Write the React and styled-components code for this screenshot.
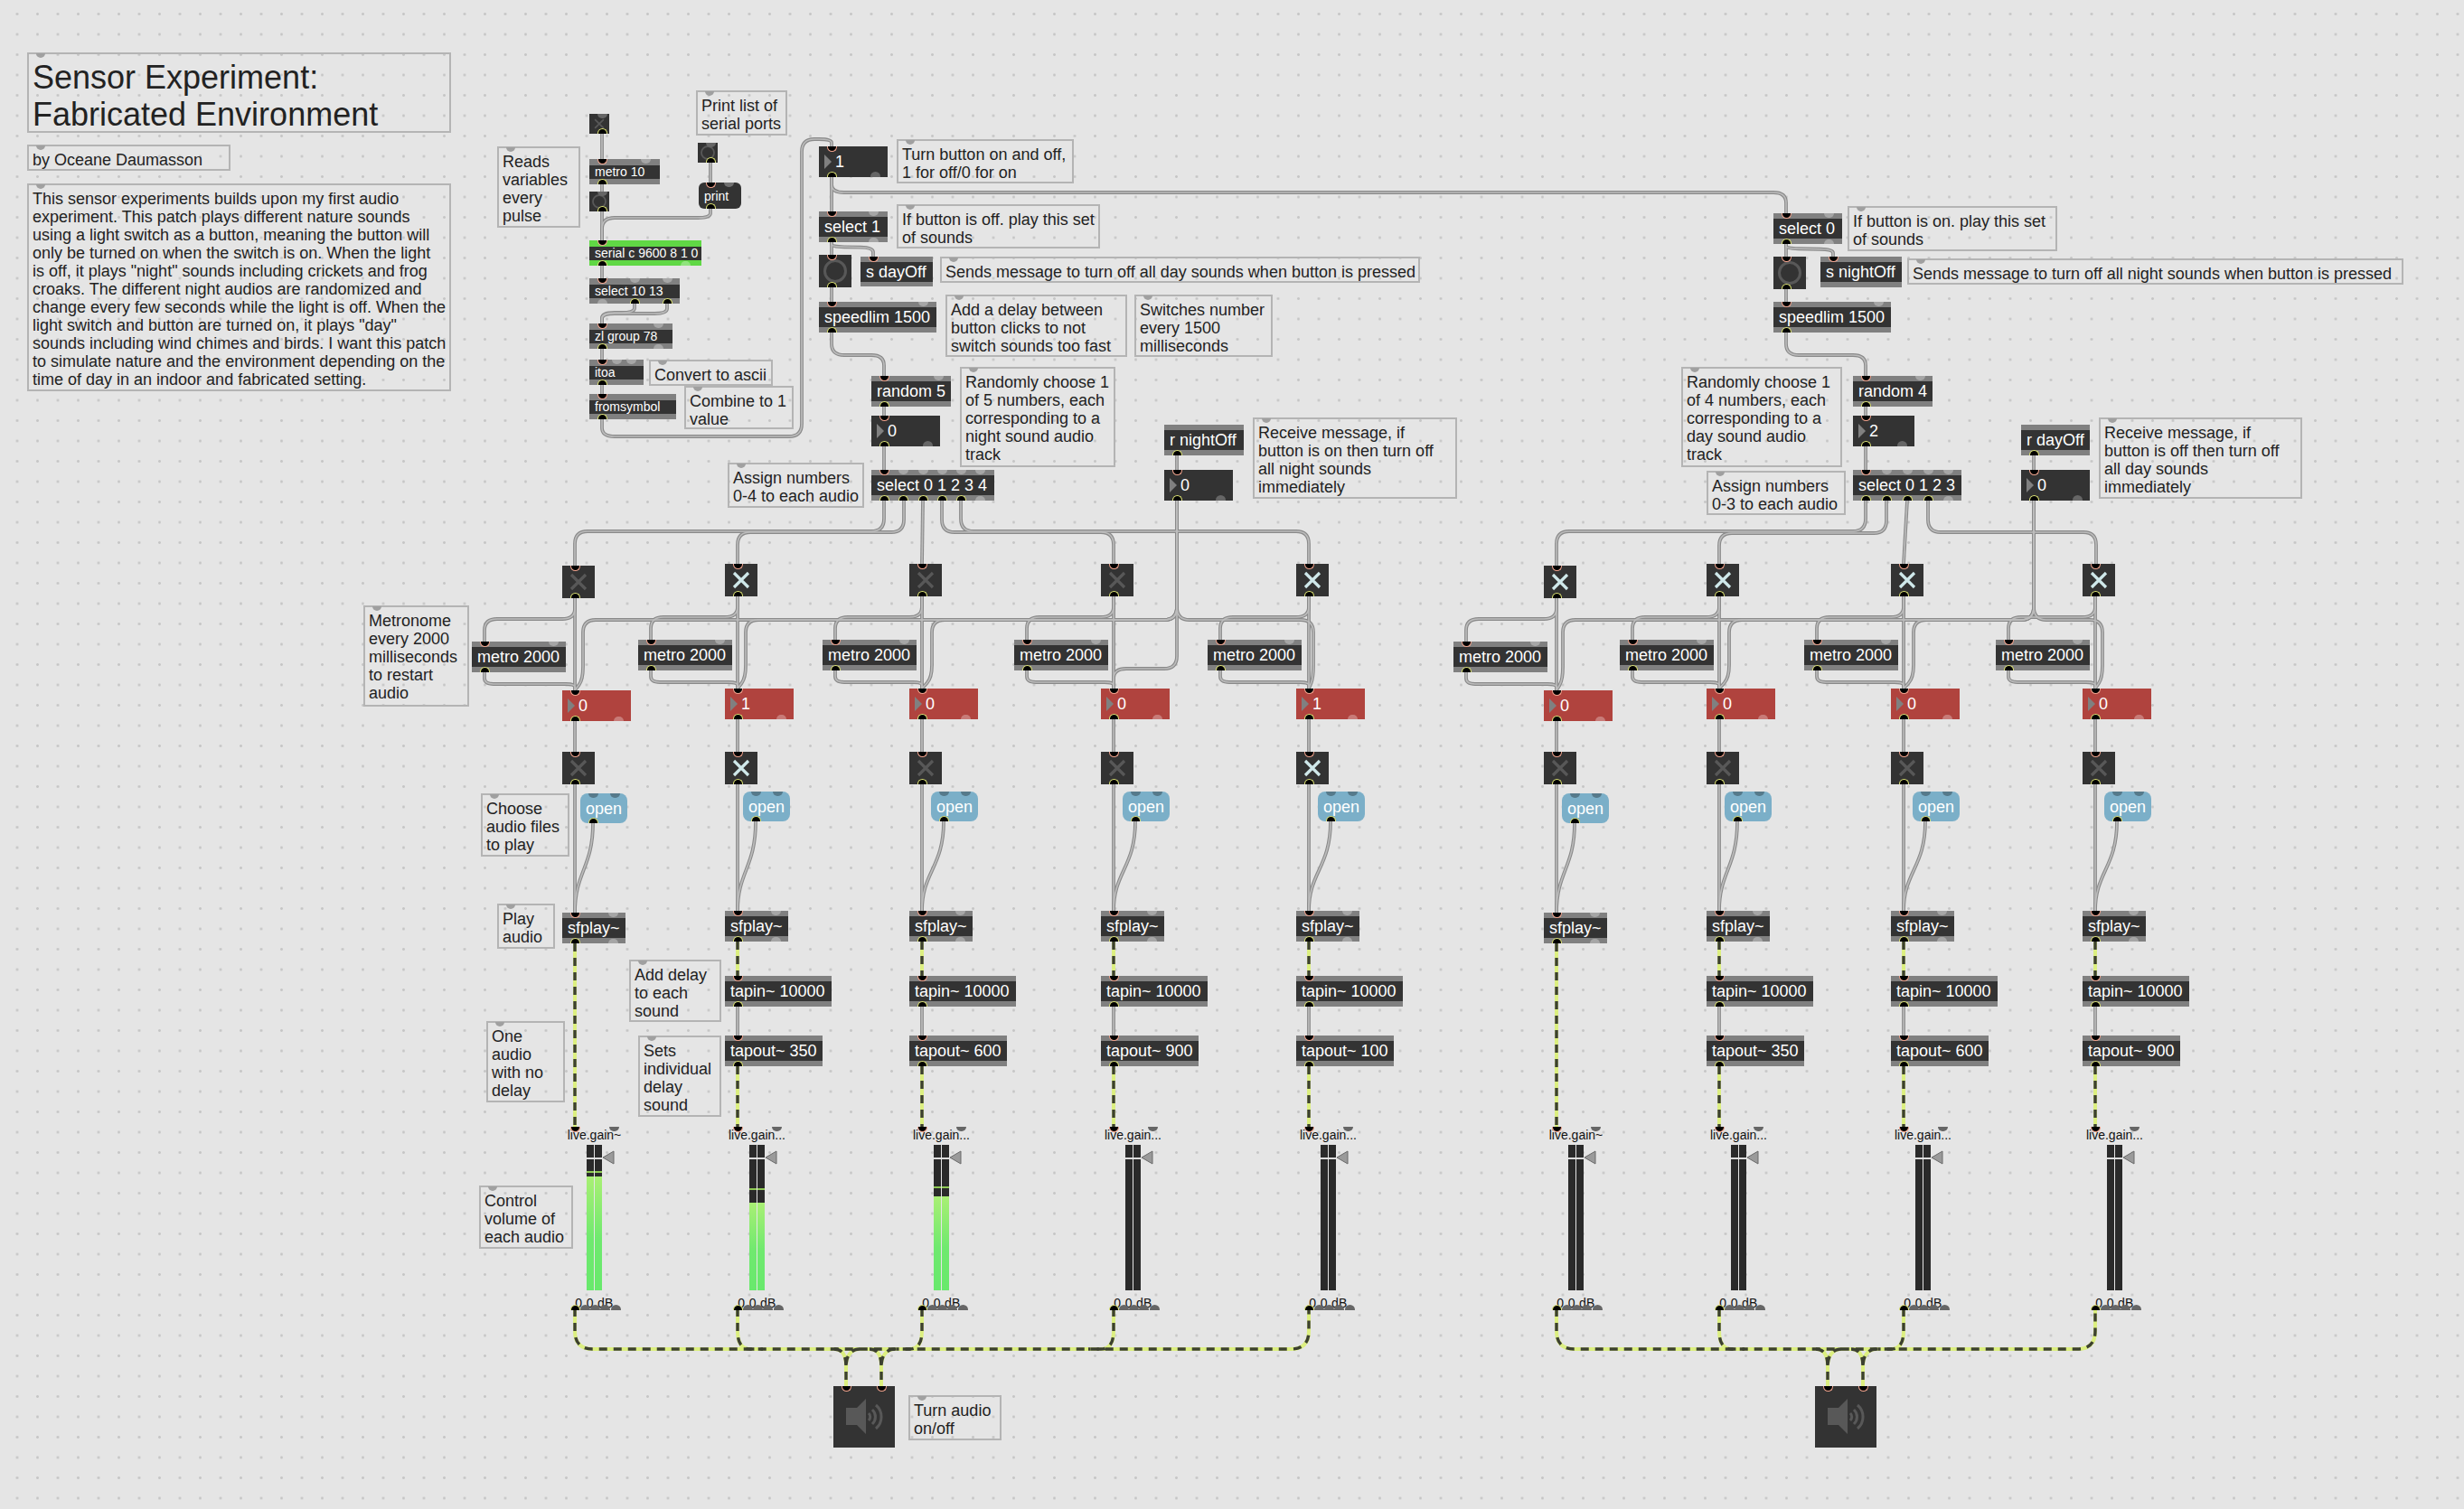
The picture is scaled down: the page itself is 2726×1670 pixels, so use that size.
import React from "react";
import styled, { createGlobalStyle } from "styled-components";

// route through points, rounding every corner
const route = (pts, r = 14) => {
    let d = `M${pts[0][0]},${pts[0][1]}`;
    for (let i = 1; i < pts.length - 1; i++) {
        const [ax, ay] = pts[i - 1];
        const [bx, by] = pts[i];
        const [cx, cy] = pts[i + 1];
        const la = Math.hypot(bx - ax, by - ay);
        const lc = Math.hypot(cx - bx, cy - by);
        const ra = Math.min(r, la / 2);
        const rc = Math.min(r, lc / 2);
        d += ` L${bx - ((bx - ax) / la) * ra},${by - ((by - ay) / la) * ra}`;
        d += ` Q${bx},${by} ${bx + ((cx - bx) / lc) * rc},${by + ((cy - by) / lc) * rc}`;
    }
    const last = pts[pts.length - 1];
    return d + ` L${last[0]},${last[1]}`;
};

const leftCols = [
    { x: 622, ty: 626, mx: 522, ox: 642, val: 0, on: false, on2: false, gain: "live.gain~", peak: 1296, fill: 1302 },
    { x: 802, ty: 624, mx: 706, ox: 822, val: 1, on: true, on2: true, tap: 350, outW: 108, gain: "live.gain...", peak: 1315, fill: 1331 },
    { x: 1006, ty: 624, mx: 910, ox: 1030, val: 0, on: false, on2: false, tap: 600, outW: 108, gain: "live.gain...", peak: 1313, fill: 1324 },
    { x: 1218, ty: 624, mx: 1122, ox: 1242, val: 0, on: false, on2: false, tap: 900, outW: 108, gain: "live.gain..." },
    { x: 1434, ty: 624, mx: 1336, ox: 1458, val: 1, on: true, on2: true, tap: 100, outW: 108, gain: "live.gain..." },
];

const rightCols = [
    { x: 1708, ty: 626, mx: 1608, ox: 1728, val: 0, on: true, on2: false, gain: "live.gain~" },
    { x: 1888, ty: 624, mx: 1792, ox: 1908, val: 0, on: true, on2: false, tap: 350, outW: 108, gain: "live.gain..." },
    { x: 2092, ty: 624, mx: 1996, ox: 2116, val: 0, on: true, on2: false, tap: 600, outW: 108, gain: "live.gain..." },
    { x: 2304, ty: 624, mx: 2208, ox: 2328, val: 0, on: true, on2: false, tap: 900, outW: 108, gain: "live.gain..." },
];

const comments = [
    { x: 30, y: 58, w: 469, h: 89, big: true, text: "Sensor Experiment:\nFabricated Environment" },
    { x: 30, y: 160, w: 225, h: 29, text: "by Oceane Daumasson" },
    { x: 30, y: 203, w: 469, h: 230, text: `This sensor experiments builds upon my first audio
experiment. This patch plays different nature sounds
using a light switch as a button, meaning the button will
only be turned on when the switch is on. When the light
is off, it plays "night" sounds including crickets and frog
croaks. The different night audios are randomized and
change every few seconds while the light is off. When the
light switch and button are turned on, it plays "day"
sounds including wind chimes and birds. I want this patch
to simulate nature and the environment depending on the
time of day in an indoor and fabricated setting.` },
    { x: 550, y: 162, w: 92, h: 90, text: "Reads\nvariables\nevery\npulse" },
    { x: 770, y: 100, w: 101, h: 50, text: "Print list of\nserial ports" },
    { x: 718, y: 398, w: 137, h: 29, text: "Convert to ascii" },
    { x: 757, y: 427, w: 121, h: 48, text: "Combine to 1\nvalue" },
    { x: 992, y: 154, w: 196, h: 49, text: "Turn button on and off,\n1 for off/0 for on" },
    { x: 992, y: 226, w: 225, h: 49, text: "If button is off. play this set\nof sounds" },
    { x: 1040, y: 284, w: 531, h: 29, text: "Sends message to turn off all day sounds when button is pressed" },
    { x: 1046, y: 326, w: 201, h: 69, text: "Add a delay between\nbutton clicks to not\nswitch sounds too fast" },
    { x: 1255, y: 326, w: 153, h: 69, text: "Switches number\nevery 1500\nmilliseconds" },
    { x: 1062, y: 406, w: 172, h: 111, text: "Randomly choose 1\nof 5 numbers, each\ncorresponding to a\nnight sound audio\ntrack" },
    { x: 805, y: 512, w: 151, h: 50, text: "Assign numbers\n0-4 to each audio" },
    { x: 1386, y: 462, w: 226, h: 90, text: "Receive message, if\nbutton is on then turn off\nall night sounds\nimmediately" },
    { x: 402, y: 670, w: 117, h: 112, text: "Metronome\nevery 2000\nmilliseconds\nto restart\naudio" },
    { x: 532, y: 878, w: 98, h: 70, text: "Choose\naudio files\nto play" },
    { x: 550, y: 1000, w: 64, h: 50, text: "Play\naudio" },
    { x: 696, y: 1062, w: 102, h: 69, text: "Add delay\nto each\nsound" },
    { x: 706, y: 1146, w: 92, h: 90, text: "Sets\nindividual\ndelay\nsound" },
    { x: 538, y: 1130, w: 87, h: 90, text: "One\naudio\nwith no\ndelay" },
    { x: 530, y: 1312, w: 104, h: 70, text: "Control\nvolume of\neach audio" },
    { x: 1005, y: 1544, w: 103, h: 50, text: "Turn audio\non/off" },
    { x: 2044, y: 228, w: 232, h: 50, text: "If button is on. play this set\nof sounds" },
    { x: 2110, y: 286, w: 549, h: 29, text: "Sends message to turn off all night sounds when button is pressed" },
    { x: 1860, y: 406, w: 178, h: 111, text: "Randomly choose 1\nof 4 numbers, each\ncorresponding to a\nday sound audio\ntrack" },
    { x: 1888, y: 521, w: 154, h: 49, text: "Assign numbers\n0-3 to each audio" },
    { x: 2322, y: 462, w: 225, h: 90, text: "Receive message, if\nbutton is off then turn off\nall day sounds\nimmediately" },
];

const objects = [
    { x: 652, y: 176, w: 78, small: true, text: "metro 10", hin: [62] },
    { x: 652, y: 266, w: 124, small: true, green: true, text: "serial c 9600 8 1 0", hout: [106] },
    { x: 652, y: 308, w: 100, small: true, text: "select 10 13", hin: [50, 86], out: [50, 86], hout: [14] },
    { x: 652, y: 358, w: 92, small: true, text: "zl group 78", hin: [76], hout: [76] },
    { x: 652, y: 398, w: 60, small: true, text: "itoa", hin: [30, 46] },
    { x: 652, y: 436, w: 96, small: true, text: "fromsymbol" },
    { x: 906, y: 234, w: 76, text: "select 1", hin: [60], hout: [60] },
    { x: 952, y: 284, w: 80, h: 33, text: "s dayOff", noOut: true },
    { x: 906, y: 334, w: 130, text: "speedlim 1500", hin: [115] },
    { x: 964, y: 416, w: 88, text: "random 5", hin: [74] },
    { x: 964, y: 520, w: 136, text: "select 0 1 2 3 4", hin: [35.5, 57, 78, 99, 120], out: [14, 35.5, 57, 78, 99], hout: [120] },
    { x: 1288, y: 470, w: 88, text: "r nightOff", noIn: true },
    { x: 1962, y: 236, w: 76, text: "select 0", hin: [61], hout: [61] },
    { x: 2014, y: 284, w: 90, h: 34, text: "s nightOff", noOut: true },
    { x: 1962, y: 334, w: 130, text: "speedlim 1500", hin: [116] },
    { x: 2050, y: 416, w: 88, text: "random 4", hin: [74] },
    { x: 2050, y: 520, w: 120, text: "select 0 1 2 3", hin: [37, 60, 83, 105], out: [14, 37, 60, 83], hout: [105] },
    { x: 2236, y: 470, w: 76, text: "r dayOff", noIn: true },
];

const numbers = [
    { x: 906, y: 162, w: 76, val: 1 },
    { x: 964, y: 460, w: 76, val: 0 },
    { x: 1288, y: 520, w: 76, val: 0 },
    { x: 2050, y: 460, w: 68, val: 2 },
    { x: 2236, y: 520, w: 76, val: 0 },
];

const buildWires = () => {
    const plain = [
        [[666, 148], [666, 176]],
        [[666, 204], [666, 212]],
        [[666, 234], [666, 266]],
        [[786, 180], [786, 202]],
        [[786, 231], [786, 241], [666, 241], [666, 266]],
        [[666, 294], [666, 308]],
        [[702, 336], [702, 346], [666, 346], [666, 358]],
        [[738, 336], [738, 347], [666, 347], [666, 358]],
        [[666, 386], [666, 398]],
        [[666, 426], [666, 436]],
        [[666, 464], [666, 483], [887, 483], [887, 154], [920, 154], [920, 162]],

        [[920, 196], [920, 234]],
        [[920, 196], [920, 213], [1976, 213], [1976, 236]],
        [[920, 268], [920, 282]],
        [[920, 268], [920, 273], [966, 274], [966, 284]],
        [[920, 318], [920, 334]],
        [[920, 368], [920, 393], [978, 393], [978, 416]],
        [[978, 450], [978, 460]],
        [[978, 494], [978, 520]],
        [[1302, 504], [1302, 520]],

        [[978, 554], [978, 588], [636, 588], [636, 626]],
        [[1000, 554], [1000, 589], [816, 589], [816, 624]],
        [[1021, 554], [1020, 624]],
        [[1042, 554], [1042, 589], [1232, 589], [1232, 624]],
        [[1063, 554], [1063, 588], [1448, 588], [1448, 624]],

        [[1302, 554], [1302, 686], [645, 686], [645, 752], [636, 764]],
        [[1302, 554], [1302, 686], [825, 686], [825, 750], [816, 762]],
        [[1302, 554], [1302, 686], [1031, 686], [1031, 750], [1020, 762]],
        [[1302, 554], [1302, 740], [1232, 740], [1232, 762]],
        [[1302, 554], [1302, 686], [1453, 686], [1453, 750], [1448, 762]],

        [[1976, 270], [1976, 284]],
        [[1976, 270], [1976, 275], [2028, 276], [2028, 284]],
        [[1976, 320], [1976, 334]],
        [[1976, 368], [1976, 393], [2064, 393], [2064, 416]],
        [[2064, 450], [2064, 460]],
        [[2064, 494], [2064, 520]],
        [[2250, 504], [2250, 520]],

        [[2064, 554], [2064, 588], [1722, 588], [1722, 626]],
        [[2087, 554], [2087, 590], [1902, 590], [1902, 624]],
        [[2110, 554], [2106, 624]],
        [[2133, 554], [2133, 589], [2319, 589], [2319, 624]],

        [[2250, 554], [2250, 686], [1729, 686], [1729, 752], [1722, 764]],
        [[2250, 554], [2250, 686], [1913, 686], [1913, 750], [1902, 762]],
        [[2250, 554], [2250, 686], [2117, 686], [2117, 750], [2106, 762]],
        [[2250, 554], [2250, 686], [2326, 686], [2326, 750], [2318, 762]],
    ].map(p => route(p));

    const audio = [];
    [...leftCols, ...rightCols].forEach(c => {
        const px = c.x + 14;
        const top = c.ty === 626 ? 2 : 0;
        plain.push(route([[px, c.ty + 36], [px, c.ty + 59], [c.mx + 14, c.ty + 59], [c.mx + 14, 708 + top]]));
        plain.push(route([[px, c.ty + 36], [px, 762 + top]]));
        plain.push(route([[c.mx + 14, 742 + top], [c.mx + 14, 755 + top], [px, 755 + top], [px, 762 + top]], 10));
        plain.push(route([[px, 796 + top], [px, 832]]));
        plain.push(route([[px, 868], [px, 1008 + top]]));
        plain.push(`M${c.ox + 14},${909 + top} C${c.ox + 14},960 ${px},965 ${px},${1008 + top}`);
        if (c.tap) {
            plain.push(route([[px, 1113], [px, 1146]]));
            audio.push(route([[px, 1042 + top], [px, 1080]]));
            audio.push(route([[px, 1180], [px, 1247]]));
        } else {
            audio.push(route([[px, 1044], [px, 1247]]));
        }
    });

    // one long bus per speaker, the middle outlets curve into it, then a Y into each inlet
    const bus = (cols, a, b) => {
        const first = cols[0].x + 14;
        const last = cols[cols.length - 1].x + 14;
        audio.push(route([[first, 1448], [first, 1493], [last, 1493], [last, 1448]], 20));
        cols.slice(1, -1).forEach(c => {
            const px = c.x + 14;
            const toward = px < a ? px + 28 : px - 28;
            audio.push(route([[px, 1448], [px, 1493], [toward, 1493]], 20));
        });
        [a, b].forEach(p => {
            audio.push(`M${p - 13},1493 C${p - 4},1493 ${p},1500 ${p},1512 L${p},1534`);
            audio.push(`M${p + 15},1493 C${p + 6},1493 ${p},1500 ${p},1512`);
        });
    };
    bus(leftCols, 936, 975);
    bus(rightCols, 2022, 2061);

    return { plain, audio };
};

const wires = buildWires();

const GlobalStyle = createGlobalStyle`
    body {
        margin: 0;
        background: #e5e5e5;
    }
`;

const Patcher = styled.div`
    position: relative;
    width: 2726px;
    height: 1670px;
    overflow: hidden;
    background-color: #e5e5e5;
    background-image: radial-gradient(circle, #c6c6c6 1.1px, transparent 1.7px);
    background-size: 22.5px 22.5px;
    background-position: 7.75px 4.25px;
    font-family: "Liberation Sans", Arial, sans-serif;
`;

const WireLayer = styled.svg`
    position: absolute;
    left: 0;
    top: 0;
    fill: none;
`;

const placed = styled.div.attrs(p => ({
    style: { left: p.$x, top: p.$y, width: p.$w, height: p.$h },
}));

const Comment = placed`
    position: absolute;
    box-sizing: border-box;
    border: 2px solid #b4b4b4;
    padding: ${p => (p.$big ? "6px" : "5px")} 4px 0;
    font-size: ${p => (p.$big ? "36px" : "18px")};
    line-height: ${p => (p.$big ? "40.5px" : "20px")};
    color: #222;
    white-space: pre;

    &::before {
        content: "";
        position: absolute;
        left: 8px;
        top: -1px;
        width: 10px;
        height: 5px;
        border-radius: 0 0 5px 5px;
        background: #a0a0a0;
    }
`;

const ObjectBox = placed`
    position: absolute;
    display: flex;
    align-items: center;
    background: ${p => (p.$green ? "#60d845" : "#808080")};
`;

const ObjectLabel = styled.div`
    flex: 1;
    box-sizing: border-box;
    height: ${p => (p.$small ? "15px" : "22px")};
    padding-left: 6px;
    background: #333;
    color: #fff;
    font-size: ${p => (p.$small ? "14px" : "18px")};
    line-height: ${p => (p.$small ? "15px" : "23px")};
    white-space: nowrap;
`;

const portShapes = {
    in: "top: 0; height: 6px; background: #000; border: 1px solid #f2a48e; border-top: 0; border-radius: 0 0 6px 6px;",
    out: "bottom: 0; height: 6px; background: #000; border: 1px solid #dfe576; border-bottom: 0; border-radius: 6px 6px 0 0;",
    hollowIn: "top: 0; height: 5px; background: rgba(255, 255, 255, 0.3); border-radius: 0 0 6px 6px;",
    hollowOut: "bottom: 0; height: 5px; background: rgba(255, 255, 255, 0.3); border-radius: 6px 6px 0 0;",
    darkIn: "top: 0; height: 5px; background: rgba(0, 0, 0, 0.3); border-radius: 0 0 6px 6px;",
    dimTop: "top: 0; height: 5px; background: #666; border-radius: 0 0 6px 6px;",
    dimBottom: "bottom: 0; height: 6px; background: #666; border-radius: 6px 6px 0 0;",
};

const Port = styled.span.attrs(p => ({ style: { left: p.$at - 5.5 } }))`
    position: absolute;
    box-sizing: border-box;
    width: 11px;
    ${p => portShapes[p.$kind]}
`;

const NumberBox = placed`
    position: absolute;
    display: flex;
    align-items: center;
    gap: 4px;
    padding-left: 6px;
    box-sizing: border-box;
    background: ${p => (p.$red ? "#b0433e" : "#333")};
    color: #fff;
    font-size: 18px;
    line-height: 36px;
`;

const Arrow = styled.span`
    width: 0;
    height: 0;
    border-left: 8px solid #808080;
    border-top: 8px solid transparent;
    border-bottom: 8px solid transparent;
`;

const SquareBox = placed`
    position: absolute;
    background: #333;

    svg {
        display: block;
        width: 100%;
        height: 100%;
    }
`;

const MessageBox = placed`
    position: absolute;
    box-sizing: border-box;
    padding-left: 6px;
    border-radius: ${p => (p.$small ? "6px" : "8px")};
    background: ${p => (p.$blue ? "#7bafc8" : "#333")};
    color: #fff;
    font-size: ${p => (p.$small ? "14px" : "18px")};
    line-height: ${p => p.$h + 1}px;
`;

const GainStrip = styled.div.attrs(p => ({ style: { left: p.$x } }))`
    position: absolute;
    top: 1247px;
    width: 71px;
    height: 203px;
    display: flex;
    flex-direction: column;
    align-items: center;
    font-size: 14px;
    color: #111;
`;

const GainName = styled.div`
    height: 18px;
    margin-bottom: 2px;
    line-height: 18px;
    white-space: nowrap;
`;

const Meter = styled.div`
    position: relative;
    display: flex;
    gap: 1.5px;
`;

const Channel = styled.div`
    position: relative;
    display: flex;
    flex-direction: column;
    justify-content: flex-end;
    width: 8px;
    height: 161px;
    background: #2a2a2a;

    &::before {
        content: "";
        position: absolute;
        left: 0;
        right: 0;
        top: 14px;
        height: 2px;
        background: #dcdcdc;
    }
`;

const Fill = styled.div`
    background: linear-gradient(#a9ef74, #6fe96f 55%, #68e96c);
`;

const Peak = styled.div.attrs(p => ({ style: { top: p.$top } }))`
    position: absolute;
    left: 0;
    right: 0;
    height: 2px;
    background: #8fca55;
`;

const Handle = styled.svg`
    position: absolute;
    left: 17.5px;
    top: 6px;
`;

const GainValue = styled.div`
    margin-top: 6px;
    height: 16px;
    line-height: 16px;
    letter-spacing: 0.3px;
`;

const Basic = ({ o }) => {
    const h = o.h || (o.small ? 28 : 34);
    return (
        <ObjectBox $x={o.x} $y={o.y} $w={o.w} $h={h} $green={o.green}>
            <ObjectLabel $small={o.small}>{o.text}</ObjectLabel>
            {!o.noIn && <Port $kind="in" $at={14} />}
            {(o.hin || []).map(a => <Port key={a} $kind="hollowIn" $at={a} />)}
            {!o.noOut && !o.out && <Port $kind="out" $at={14} />}
            {(o.out || []).map(a => <Port key={a} $kind="out" $at={a} />)}
            {(o.hout || []).map(a => <Port key={a} $kind="hollowOut" $at={a} />)}
        </ObjectBox>
    );
};

const Num = ({ x, y, w, val, red }) => (
    <NumberBox $x={x} $y={y} $w={w} $h={34} $red={red}>
        <Arrow />
        {val}
        <Port $kind="in" $at={14} />
        <Port $kind="out" $at={14} />
        <Port $kind={red ? "hollowOut" : "dimBottom"} $at={w - 14} />
    </NumberBox>
);

const Toggle = ({ x, y, size = 36, on, ports = true }) => {
    const k = size / 36;
    return (
        <SquareBox $x={x} $y={y} $w={size} $h={size}>
            <svg viewBox="0 0 36 36">
                <path d="M10 10 L26 26 M26 10 L10 26" stroke={on ? "#cfe8ea" : "#585858"} strokeWidth={3.2 * Math.max(k, 0.9)} fill="none" />
            </svg>
            {ports && <Port $kind="in" $at={14} />}
            {!ports && <Port $kind="dimTop" $at={14} />}
            <Port $kind="out" $at={14} />
        </SquareBox>
    );
};

const Bang = ({ x, y, size = 36 }) => (
    <SquareBox $x={x} $y={y} $w={size} $h={size}>
        <svg viewBox="0 0 36 36">
            <circle cx="18" cy="18" r="11.5" stroke="#585858" strokeWidth="3" fill="none" />
        </svg>
        {size === 36 ? <Port $kind="in" $at={14} /> : <Port $kind="dimTop" $at={14} />}
        <Port $kind="out" $at={14} />
    </SquareBox>
);

const Speaker = ({ x, a, b }) => (
    <SquareBox $x={x} $y={1534} $w={68} $h={68}>
        <svg viewBox="0 0 68 68">
            <path d="M14 24 H26 L36 14 V53 L26 43 H14 Z" fill="#585858" />
            <g stroke="#585858" strokeWidth="3" fill="none">
                <path d="M39 30 A5.5 5.5 0 0 1 39 38" />
                <path d="M43 26 A11 11 0 0 1 43 42" />
                <path d="M47 21 A17 17 0 0 1 47 47" />
            </g>
        </svg>
        <Port $kind="in" $at={a} />
        <Port $kind="in" $at={b} />
    </SquareBox>
);

const Gain = ({ c }) => {
    const bottomPorts = [25, 36, 47, 59];
    const peakTop = c.peak ? c.peak - 1267 : null;
    const fill = c.fill ? 1428 - c.fill : 0;
    return (
        <GainStrip $x={c.x}>
            <GainName>{c.gain}</GainName>
            <Meter>
                {[0, 1].map(i => (
                    <Channel key={i}>
                        {c.peak && <Peak $top={peakTop} />}
                        <Fill style={{ height: fill }} />
                    </Channel>
                ))}
                <Handle width="14" height="16" viewBox="0 0 14 16">
                    <path d="M13 1 V15 L1 8 Z" fill="#9a9a9a" stroke="#6a6a6a" />
                </Handle>
            </Meter>
            <GainValue>0.0 dB</GainValue>
            <Port $kind="in" $at={14} />
            <Port $kind="dimTop" $at={57} />
            <Port $kind="out" $at={14} />
            {bottomPorts.map(a => <Port key={a} $kind="dimBottom" $at={a} />)}
        </GainStrip>
    );
};

const Column = ({ c }) => {
    const top = c.ty === 626 ? 2 : 0;
    return (
        <>
            <Toggle x={c.x} y={c.ty} on={c.on} />
            <Basic o={{ x: c.mx, y: 708 + top, w: 104, text: "metro 2000", hin: [90] }} />
            <Num x={c.x} y={762 + top} w={76} val={c.val} red />
            <Toggle x={c.x} y={832} on={c.on2} />
            <MessageBox $x={c.ox} $y={876 + top} $w={52} $h={33} $blue>
                open
                <Port $kind="darkIn" $at={14} />
                <Port $kind="darkIn" $at={38} />
                <Port $kind="out" $at={14} />
            </MessageBox>
            <Basic o={{ x: c.x, y: 1008 + top, w: 70, text: "sfplay~", hin: [56], hout: [56] }} />
            {c.tap && <Basic o={{ x: c.x, y: 1080, w: 118, text: "tapin~ 10000" }} />}
            {c.tap && <Basic o={{ x: c.x, y: 1146, w: c.outW, text: `tapout~ ${c.tap}` }} />}
            <Gain c={c} />
        </>
    );
};

const App = () => {
    return (
        <Patcher>
            <GlobalStyle />
            <WireLayer width="2726" height="1670">
                {wires.plain.map((d, i) => <path key={i} d={d} stroke="#8a8a8a" strokeWidth="3.8" />)}
                {wires.plain.map((d, i) => <path key={i} d={d} stroke="#bcbcbc" strokeWidth="1.6" />)}
                {wires.audio.map((d, i) => <path key={i} d={d} stroke="#dcef80" strokeWidth="4" />)}
                {wires.audio.map((d, i) => <path key={i} d={d} stroke="#3c4030" strokeWidth="3.4" strokeDasharray="9 7" />)}
            </WireLayer>

            {comments.map(c => (
                <Comment key={c.text} $x={c.x} $y={c.y} $w={c.w} $h={c.h} $big={c.big}>{c.text}</Comment>
            ))}

            <Toggle x={652} y={126} size={22} ports={false} />
            <Bang x={652} y={212} size={22} />
            <Bang x={772} y={158} size={22} />
            <MessageBox $x={773} $y={202} $w={47} $h={29} $small>
                print
                <Port $kind="in" $at={13} />
                <Port $kind="hollowIn" $at={33} />
                <Port $kind="out" $at={13} />
            </MessageBox>
            <Bang x={906} y={282} />
            <Bang x={1962} y={284} />

            {objects.map(o => <Basic key={`${o.x}-${o.y}`} o={o} />)}
            {numbers.map(n => <Num key={`${n.x}-${n.y}`} {...n} />)}

            {[...leftCols, ...rightCols].map(c => <Column key={c.x} c={c} />)}

            <Speaker x={922} a={14} b={53} />
            <Speaker x={2008} a={14} b={53} />
        </Patcher>
    );
};

export default App;
